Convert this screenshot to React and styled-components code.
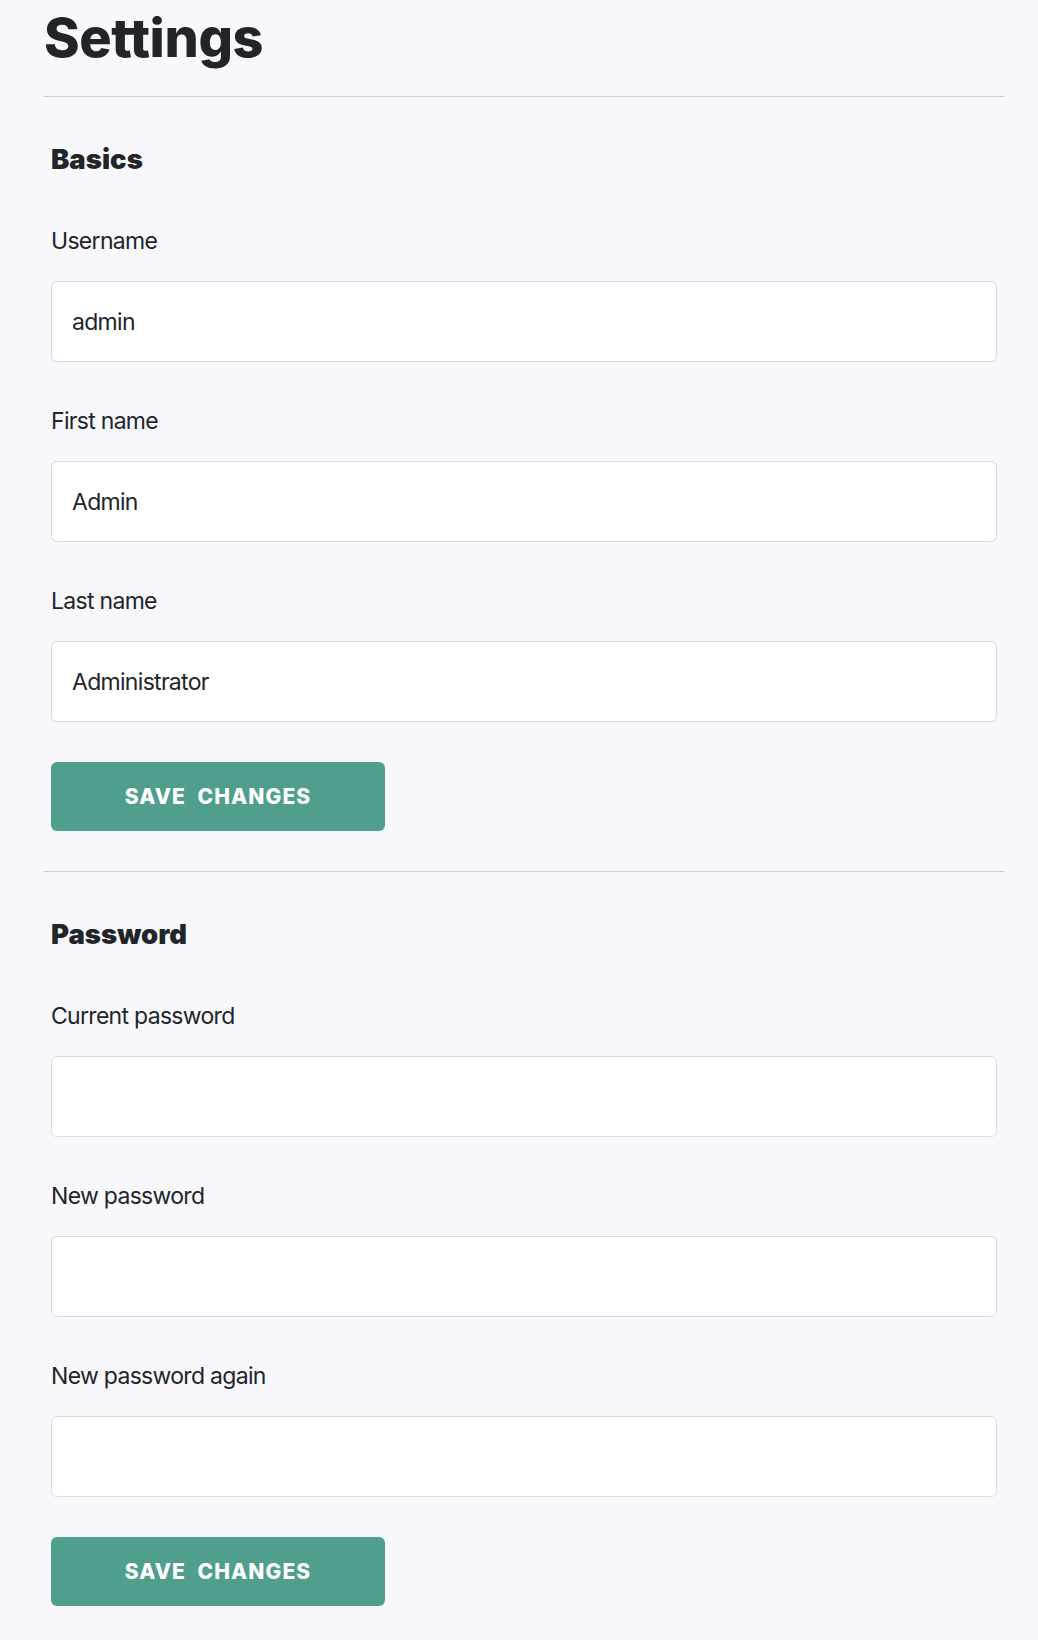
import React from 'react';
import styled, { createGlobalStyle } from 'styled-components';

const GlobalStyle = createGlobalStyle`
    body {
        margin: 0;
        background-color: #f8f8fc;
        color: #212529;
        font-family: Inter, "Noto Sans", sans-serif;
    }
`

const Page = styled.div`
    width: 960px;
    margin-left: 44px;
    padding-top: 6px;
    padding-bottom: 32px;
`

const Title = styled.h1`
    margin: 0;
    font-size: 54px;
    font-weight: 800;
    line-height: 64px;
    letter-spacing: -0.4px;
`

const Divider = styled.hr`
    margin: ${({ top }) => top || '26px'} 0 0 0;
    border: none;
    border-top: 1px solid #cdcdd4;
`

const Section = styled.section`
    padding: 0 7px;
`

const SectionTitle = styled.h2`
    margin: 47px 0 51px 0;
    font-size: 27.5px;
    font-weight: 900;
    line-height: 30px;
    letter-spacing: 0;
`

const FormGroup = styled.div`
    margin-bottom: 43px;
`

const Label = styled.label`
    display: block;
    font-size: 23px;
    line-height: 33px;
    letter-spacing: -0.7px;
    margin-bottom: 23px;
`

const FormField = styled.input`
    -webkit-appearance: none;
    display: block;
    box-sizing: border-box;
    width: 100%;
    height: 81px;
    padding: 0 20px;
    background-color: #fff;
    border: 1px solid #d9d9de;
    border-radius: 6px;
    outline: none;
    font-family: Inter, "Noto Sans", sans-serif;
    font-size: 23px;
    letter-spacing: -0.7px;
    color: #212529;
`

const SaveButton = styled.button`
    display: block;
    width: 334px;
    height: 69px;
    margin-top: -3px;
    background-color: #4f9f8c;
    color: #fff;
    border: none;
    border-radius: 6px;
    font-family: Inter, "Noto Sans", sans-serif;
    font-size: 21px;
    font-weight: 800;
    letter-spacing: 1.1px;
    word-spacing: 6px;
    text-transform: uppercase;
    cursor: pointer;
`

const Field = ({ label, type, defaultValue }) => (
    <FormGroup>
        <Label>{label}</Label>
        <FormField type={type || 'text'} defaultValue={defaultValue} />
    </FormGroup>
)

export default function App() {
    return (
        <Page>
            <GlobalStyle />
            <Title>Settings</Title>
            <Divider />
            <Section>
                <SectionTitle>Basics</SectionTitle>
                <Field label="Username" defaultValue="admin" />
                <Field label="First name" defaultValue="Admin" />
                <Field label="Last name" defaultValue="Administrator" />
                <SaveButton>Save changes</SaveButton>
            </Section>
            <Divider top="40px" />
            <Section>
                <SectionTitle>Password</SectionTitle>
                <Field label="Current password" type="password" />
                <Field label="New password" type="password" />
                <Field label="New password again" type="password" />
                <SaveButton>Save changes</SaveButton>
            </Section>
        </Page>
    )
}
